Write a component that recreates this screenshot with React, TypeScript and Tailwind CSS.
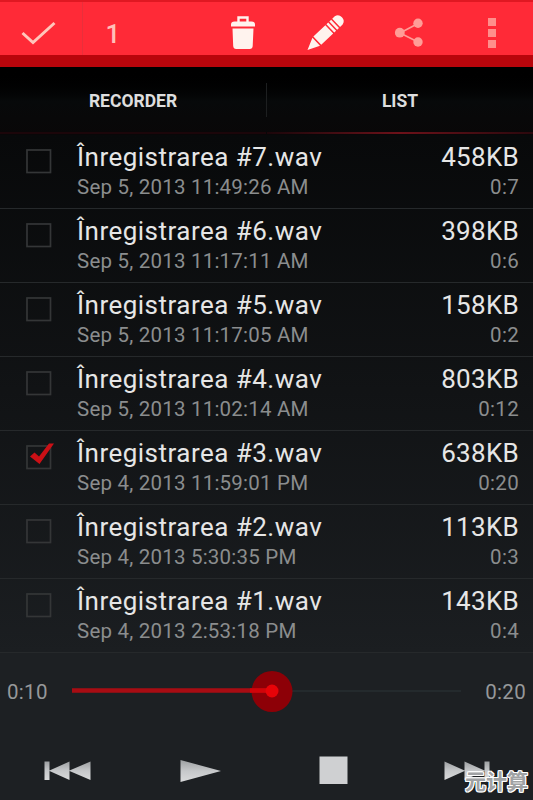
import React, { useState } from "react";

interface Recording {
  id: number;
  date: string;
  size: string;
  length: string;
}

const recordings: Recording[] = [
  { id: 7, date: "Sep 5, 2013 11:49:26 AM", size: "458KB", length: "0:7" },
  { id: 6, date: "Sep 5, 2013 11:17:11 AM", size: "398KB", length: "0:6" },
  { id: 5, date: "Sep 5, 2013 11:17:05 AM", size: "158KB", length: "0:2" },
  { id: 4, date: "Sep 5, 2013 11:02:14 AM", size: "803KB", length: "0:12" },
  { id: 3, date: "Sep 4, 2013 11:59:01 PM", size: "638KB", length: "0:20" },
  { id: 2, date: "Sep 4, 2013 5:30:35 PM", size: "113KB", length: "0:3" },
  { id: 1, date: "Sep 4, 2013 2:53:18 PM", size: "143KB", length: "0:4" },
];

function ActionBar({ count }: { count: number }) {
  return (
    <header className="h-[67px] flex items-start bg-[#ff2a37] border-t-2 border-[#e01822] border-b-12 border-b-[#b9050c]">
      <button className="w-[83px] h-full border-r border-[#e8303b]" title="Done">
        <svg width="82" height="53" viewBox="0 2 82 53" fill="none">
          <path d="M22.500 33l10.500 9.500L54.500 23" stroke="#ffc6bb" strokeWidth="3" />
        </svg>
      </button>
      <span className="w-[60px] pt-[16px] text-center text-[26px] leading-8 font-medium text-[#ffc0b8]">
        {count}
      </span>
      <div className="flex-1" />
      <button className="w-[83px] h-full" title="Delete">
        <svg width="83" height="53" viewBox="201 2 83 53">
          <path d="M238.500 22v-4.500h9V22" fill="none" stroke="#fff3ee" strokeWidth="2.400" />
          <path
            d="M231 26.500v-2q0-3 3.500-3h17q3.500 0 3.500 3v2zM232.500 28.500h21l-.8 17.500q-.2 3-3 3h-13.500q-2.800 0-3-3z"
            fill="#fff3ee"
          />
        </svg>
      </button>
      <button className="w-[83px] h-full" title="Rename">
        <svg width="83" height="53" viewBox="284 2 83 53" fill="#fff3ee">
          <g transform="translate(307.500 50) rotate(-43.500)">
            <path d="M0 0L12-5.500V5.500zM13.500-5.700H30V5.700H13.500zM31.500-5.700h2.500V5.700h-2.500zM35.500-5.700H38V5.700h-2.500zM39.500-5.700H43q4.500 1 4.500 5.700T43 5.700h-3.500z" />
          </g>
        </svg>
      </button>
      <button className="w-[83px] h-full" title="Share">
        <svg width="83" height="53" viewBox="367 2 83 53" fill="#ff9d97">
          <path d="M418 23.500L400 33l18 9" fill="none" stroke="#ff9d97" strokeWidth="1.600" />
          <circle cx="418" cy="23.300" r="4.700" />
          <circle cx="399.800" cy="32.700" r="4.900" />
          <circle cx="418" cy="42" r="4.700" />
        </svg>
      </button>
      <button
        className="w-[83px] h-full flex flex-col items-center justify-center gap-[3px] pt-2"
        title="More"
      >
        <span className="size-2 bg-[#ff8f8c]" />
        <span className="size-2 bg-[#ff8f8c]" />
        <span className="size-2 bg-[#ff8f8c]" />
      </button>
    </header>
  );
}

function Tabs() {
  return (
    <nav className="h-[68px] shrink-0 flex bg-linear-to-b from-black via-[#07090a] to-[#090708] text-[17.500px] font-bold text-[#dedede]">
      <button className="flex-1 flex flex-col">
        <span className="h-[65px] w-full flex items-center justify-center pt-1">RECORDER</span>
        <span className="h-0.5 w-full bg-[#1c060a]" />
      </button>
      <span className="w-px h-[34px] mt-4 bg-[#1d1f20]" />
      <button className="flex-1 flex flex-col">
        <span className="h-[65px] w-full flex items-center justify-center pt-1">LIST</span>
        <span className="h-0.5 w-full bg-linear-to-r from-[#1c060a] via-[#6d1119] to-[#2c080d]" />
      </button>
    </nav>
  );
}

function CheckBox({ checked }: { checked: boolean }) {
  return (
    <svg className="ml-[26px] mt-3 w-[30px] h-[30px] shrink-0" viewBox="0 0 30 30" fill="none">
      <rect x="1" y="3" width="23.500" height="22.500" stroke="#343637" strokeWidth="1.700" />
      {checked && <path d="M4 13.500l4.500-4 4.500 4L23 .5l5 0L13.500 21z" fill="#cb1016" />}
    </svg>
  );
}

function RecordingRow({
  id,
  date,
  size,
  length,
  checked,
  onToggle,
}: Recording & { checked: boolean; onToggle: () => void }) {
  return (
    <li className="h-[74px] flex border-b border-[#26292b]" onClick={onToggle}>
      <CheckBox checked={checked} />
      <div className="flex-1 pl-[21px] pt-[7px] whitespace-nowrap">
        <h3 className="text-[26px] leading-[30px] tracking-[0.48px] text-[#e6e6e6]">
          Înregistrarea #{id}.wav
        </h3>
        <p className="text-[20.500px] leading-[31px] tracking-[0.21px] text-[#8b8d8e]">{date}</p>
      </div>
      <div className="pr-[14px] pt-[7px] text-right">
        <p className="text-[26px] leading-[30px] tracking-[0.3px] text-[#e6e6e6]">{size}</p>
        <p className="text-[20.500px] leading-[31px] tracking-[0.3px] text-[#8b8d8e]">{length}</p>
      </div>
    </li>
  );
}

function SeekBar({ position, duration }: { position: string; duration: string }) {
  return (
    <div className="h-[78px] flex items-center justify-between pl-[7px] pr-[7px] text-[20.500px] tracking-[0.3px] text-[#96989a]">
      <span>{position}</span>
      <svg width="404" height="60" viewBox="65 662 404 60">
        <path d="M272 691h189" stroke="#242a2d" strokeWidth="2" />
        <circle cx="272" cy="691.500" r="20.500" fill="#8d0007" />
        <path d="M72 690.500h200" stroke="#a80c13" strokeWidth="4.500" />
        <path d="M250 690.500h22" stroke="#d20309" strokeWidth="4.500" />
        <circle cx="272" cy="691" r="6.500" fill="#e70308" />
      </svg>
      <span>{duration}</span>
    </div>
  );
}

function Controls() {
  return (
    <div className="flex-1 flex">
      <svg width="533" height="69" viewBox="0 731 533 69" fill="url(#metal)">
        <defs>
          <linearGradient id="metal" x1="0" y1="0" x2="0" y2="1">
            <stop offset="0" stopColor="#9da0a2" />
            <stop offset="0.500" stopColor="#c6c8ca" />
            <stop offset="1" stopColor="#d9dadb" />
          </linearGradient>
        </defs>
        <path d="M44.500 761.500h5v9l20-9v9l21-9V780l-21-9v9l-20-9v9h-5z" />
        <path d="M180.500 760l40.500 11-40.500 11z" />
        <path d="M319.500 756.500h28V784h-28z" fill="#cfd0d2" />
        <path d="M489.500 761.500h-5v9l-20-9v9l-20-9V780l20-9v9l20-9v9h5z" />
      </svg>
    </div>
  );
}

export default function App() {
  const [selected, setSelected] = useState<number[]>([3]);

  const toggle = (id: number) =>
    setSelected((prev) => (prev.includes(id) ? prev.filter((n) => n !== id) : [...prev, id]));

  return (
    <div className="relative w-[533px] h-[800px] flex flex-col overflow-hidden bg-[#1d2023] font-[Roboto,sans-serif]">
      <ActionBar count={selected.length} />
      <Tabs />
      <ul className="h-[518px] bg-linear-to-b from-[#08090a] to-[#1b1e21]">
        {recordings.map((rec) => (
          <RecordingRow
            key={rec.id}
            {...rec}
            checked={selected.includes(rec.id)}
            onToggle={() => toggle(rec.id)}
          />
        ))}
      </ul>
      <SeekBar position="0:10" duration="0:20" />
      <Controls />

      {/* Watermark */}
      <span className="absolute left-[465px] top-[768px] text-[21px] leading-6 font-bold whitespace-nowrap text-[#a0a2a4] font-['Noto_Sans_CJK_SC',sans-serif] [text-shadow:1px_0_#fff,-1px_0_#fff,0_1px_#fff,0_-1px_#fff,1px_1px_#fff,-1px_-1px_#fff,1px_-1px_#fff,-1px_1px_#fff]">
        元计算
      </span>
    </div>
  );
}
